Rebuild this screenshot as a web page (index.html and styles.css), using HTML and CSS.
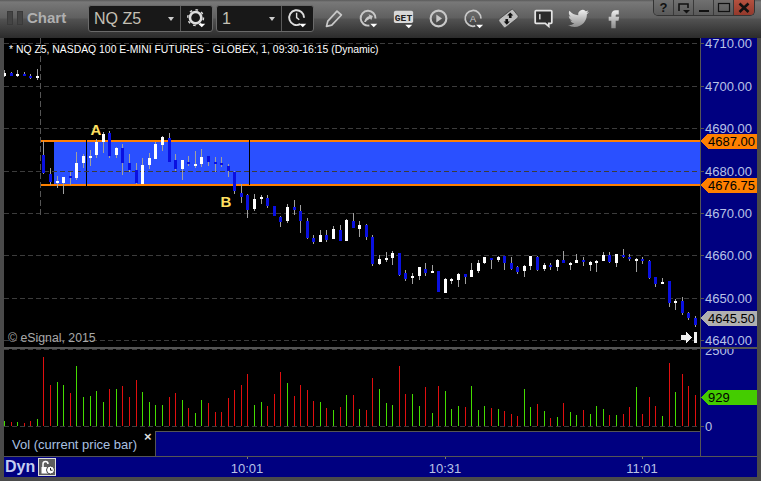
FILE: index.html
```html
<!DOCTYPE html>
<html lang="en">
<head>
  <meta charset="UTF-8">
  <title>Chart</title>
  <link rel="stylesheet" href="styles.css">
</head>
<body>
  <div class="window">
    <div class="toolbar">
      <div class="grip"><span></span><span></span></div>
      <div class="title">Chart</div>

      <div class="combo combo-symbol">
        <div class="combo-field">NQ Z5<i class="caret"></i></div>
        <div class="combo-btn">
          <svg class="icon" viewBox="0 0 24 24">
            <circle cx="11" cy="11" r="9" fill="none" stroke="#ddd" stroke-width="1.6" stroke-dasharray="3 4"/>
            <circle cx="11" cy="11" r="6.5" fill="none" stroke="#ddd" stroke-width="3"/>
            <path d="M14 18h8l-4 4z" fill="#fff"/>
          </svg>
        </div>
      </div>

      <div class="combo combo-interval">
        <div class="combo-field">1<i class="caret"></i></div>
        <div class="combo-btn">
          <svg class="icon" viewBox="0 0 24 24">
            <path d="M15 18.5A8.5 8.5 0 1 1 19.5 11" fill="none" stroke="#ddd" stroke-width="2.2"/>
            <path d="M11 5.5V11l3 2.5" fill="none" stroke="#ddd" stroke-width="1.6"/>
            <path d="M14 18h8l-4 4z" fill="#fff"/>
          </svg>
        </div>
      </div>

      <div class="tools">
        <div class="tool">
          <svg class="icon" viewBox="0 0 24 24">
            <path d="M4 21l1.5-6L16 3.5l5 4.5L10 19.5z" fill="none" stroke="#c8c8c8" stroke-width="2" stroke-linejoin="round"/>
          </svg>
        </div>
        <div class="tool">
          <svg class="icon" viewBox="0 0 24 24">
            <path d="M13 20A8.5 8.5 0 1 1 20 12" fill="none" stroke="#c8c8c8" stroke-width="2.2"/>
            <path d="M7 16c1-4 3-6 6-7l-1-2 5 2-2 5-1-2c-2 1-4 2-5 4z" fill="#c8c8c8"/>
            <path d="M14 18h8l-4 4z" fill="#fff"/>
          </svg>
        </div>
        <div class="tool">
          <svg class="icon" viewBox="0 0 24 24">
            <rect x="1" y="3" width="22" height="14" rx="2" fill="#d8d8d8"/>
            <text class="get-text" x="12" y="14.5">GET</text>
            <path d="M14 19h8l-4 4z" fill="#fff"/>
          </svg>
        </div>
        <div class="tool">
          <svg class="icon" viewBox="0 0 24 24">
            <circle cx="12" cy="12" r="9" fill="none" stroke="#c8c8c8" stroke-width="2.4"/>
            <path d="M9.5 7.5l6.5 4.5-6.5 4.5z" fill="#c8c8c8"/>
          </svg>
        </div>
        <div class="tool">
          <svg class="icon" viewBox="0 0 24 24">
            <path d="M14 20.5A9 9 0 1 1 20.5 12" fill="none" stroke="#c8c8c8" stroke-width="2"/>
            <text class="circle-a" x="11.5" y="16.5">A</text>
            <path d="M15 19h8l-4 4z" fill="#fff"/>
          </svg>
        </div>
        <div class="tool">
          <svg class="icon" viewBox="0 0 24 24">
            <rect x="1.5" y="6" width="21" height="12" rx="2" transform="rotate(-38 12 12)" fill="#bdbdbd" stroke="#3a3a3a" stroke-width="0.8"/>
            <path d="M14 5l3.5 3.5h-2v3h-3v-3h-2zM10 19l-3.500-3.500h2v-3h3v3h2z" fill="#111"/>
          </svg>
        </div>
        <div class="tool">
          <svg class="icon" viewBox="0 0 24 24">
            <path d="M3.5 3h17a1 1 0 0 1 1 1v12.5a1 1 0 0 1-1 1H18V21l-4-3.500H3.500a1 1 0 0 1-1-1V4a1 1 0 0 1 1-1z" fill="#2c2c2c" stroke="#e4e4e4" stroke-width="2"/>
            <rect x="7" y="7" width="1.6" height="6" fill="#e4e4e4"/>
          </svg>
        </div>
        <div class="tool">
          <svg class="icon" viewBox="0 0 24 24">
            <path fill="url(#bird)" d="M23.953 4.57a10 10 0 01-2.825.775 4.958 4.958 0 002.163-2.723c-.951.555-2.005.959-3.127 1.184a4.92 4.92 0 00-8.384 4.482C7.69 8.095 4.067 6.13 1.64 3.162a4.822 4.822 0 00-.666 2.475c0 1.71.87 3.213 2.188 4.096a4.904 4.904 0 01-2.228-.616v.06a4.923 4.923 0 003.946 4.827 4.996 4.996 0 01-2.212.085 4.936 4.936 0 004.604 3.417 9.867 9.867 0 01-6.102 2.105c-.39 0-.779-.023-1.17-.067a13.995 13.995 0 007.557 2.209c9.053 0 13.998-7.496 13.998-13.985 0-.21 0-.42-.015-.63A9.935 9.935 0 0024 4.59z"/>
            <defs>
              <linearGradient id="bird" x1="0" y1="0" x2="0" y2="1">
                <stop offset="0" stop-color="#eee"/>
                <stop offset="1" stop-color="#8c8c8c"/>
              </linearGradient>
            </defs>
          </svg>
        </div>
        <div class="tool">
          <svg class="icon" viewBox="0 0 24 24">
            <path fill="url(#bird)" d="M14.5 7.5H18v-5h-3.500c-3 0-5 2.200-5 5V10h-3v4.500h3V23h5v-8.500h3.200l.8-4.500h-4V8.500c0-.6.4-1 1-1z"/>
          </svg>
        </div>
      </div>

      <div class="win-btns">
        <div class="win-btn">?</div>
        <div class="win-btn">
          <svg width="14" height="12" viewBox="0 0 14 12"><path d="M2 9V2h9v4" fill="none" stroke="#111" stroke-width="1.6"/><path d="M6 8h7l-3.500 3.500z" fill="#111"/></svg>
        </div>
        <div class="win-btn">
          <svg width="14" height="12" viewBox="0 0 14 12"><rect x="2" y="8" width="10" height="2" fill="#111"/></svg>
        </div>
        <div class="win-btn">
          <svg width="14" height="12" viewBox="0 0 14 12"><rect x="1.5" y="1.5" width="11" height="8" fill="none" stroke="#111" stroke-width="1.2"/></svg>
        </div>
        <div class="win-btn win-close">
          <svg width="14" height="12" viewBox="0 0 14 12"><path d="M2.5 1.500l9 8.500M11.500 1.500l-9 8.500" stroke="#111" stroke-width="2.6"/></svg>
        </div>
      </div>
    </div>

    <svg id="price-pane" class="pane" width="753" height="309" viewBox="4 38 753 309"></svg>
    <div class="divider"></div>
    <svg id="volume-pane" class="pane" width="753" height="82" viewBox="4 349 753 82"></svg>

    <div class="legend-row">
      <div class="legend">Vol (current price bar)<span class="legend-close">×</span></div>
      <div class="legend-fill"></div>
      <div class="axis-fill"></div>
    </div>

    <div class="time-axis" id="time-axis">
      <div class="dyn">Dyn</div>
      <div class="lock">
        <svg width="15" height="15" viewBox="0 0 15 15">
          <path d="M3 7V4a2.500 2.500 0 0 1 5 0" fill="none" stroke="#fff" stroke-width="1.5"/>
          <rect x="1.5" y="7" width="8" height="6.5" fill="#fff"/>
          <circle cx="10.5" cy="10" r="4" fill="#fff" stroke="#444"/>
          <path d="M10.5 8v2.200h2" fill="none" stroke="#222"/>
        </svg>
      </div>
    </div>
  </div>

  <script src="chart.js"></script>
</body>
</html>
```

FILE: styles.css
```css
/* General Styling */
body {
  margin: 0;
  background: #4a4a4a;
  font-family: 'Liberation Sans', Arial, sans-serif;
  overflow: hidden;
}

.window {
  width: 761px;
  height: 481px;
  box-sizing: border-box;
  padding: 0 4px 4px;
  background: #4a4a4a;
}

/* Toolbar */
.toolbar {
  display: flex;
  align-items: flex-start;
  height: 38px;
  margin: 0 -4px;
  background: linear-gradient(to bottom, #5a5a5a 0, #787878 2px, #5f5f5f 18px, #525252 19px, #2b2b2b 38px);
}

.grip {
  display: flex;
  gap: 4px;
  margin: 11px 0 0 7px;
}

.grip span {
  width: 4px;
  height: 12px;
  background: #444;
  border: 1px solid #3a3a3a;
}

.title {
  width: 61px;
  margin: 9px 0 0 4px;
  font-size: 15px;
  font-weight: bold;
  line-height: 18px;
  color: #b0b0b0;
}

.combo {
  display: flex;
  height: 25px;
  margin: 5px 3px 0 0;
  background: #181818;
  border: 1px solid #6a6a6a;
  border-radius: 3px;
}

.combo-symbol { width: 123px; }
.combo-interval { width: 96px; margin-right: 2px; }

.combo-field {
  position: relative;
  flex: 1;
  padding-left: 5px;
  font-size: 16px;
  line-height: 25px;
  color: #c4c0b4;
}

.caret {
  position: absolute;
  right: 6px;
  top: 11px;
  border: 3px solid transparent;
  border-top: 4px solid #ccc;
  border-bottom: 0;
}

.combo-btn {
  display: flex;
  align-items: center;
  justify-content: center;
  width: 31px;
  border-left: 1px solid #5a5a5a;
}

.icon {
  width: 21px;
  height: 21px;
}

.tools {
  display: flex;
  margin-top: 8px;
}

.tool {
  display: flex;
  justify-content: center;
  width: 35px;
}

.get-text {
  font-family: 'Liberation Mono', monospace;
  font-size: 11px;
  font-weight: bold;
  text-anchor: middle;
  fill: #222;
}

.circle-a {
  font-size: 11px;
  text-anchor: middle;
  fill: #c8c8c8;
}

.win-btns {
  display: flex;
  margin-left: 22px;
  height: 15px;
  background: #5c5c5c;
  border: 1px solid #333;
  border-top: 0;
  border-radius: 0 0 5px 5px;
  overflow: hidden;
}

.win-btn {
  display: flex;
  align-items: center;
  justify-content: center;
  width: 19px;
  font-size: 13px;
  font-weight: bold;
  color: #111;
  background: linear-gradient(to bottom, #707070, #5a5a5a);
  border-left: 1px solid #3a3a3a;
}

.win-btn:first-child { border-left: 0; }

.win-close {
  width: 20px;
  background: linear-gradient(to bottom, #b4513f, #93392c);
}

/* Chart panes */
.pane {
  display: block;
  background: #000;
  shape-rendering: crispEdges;
}

.divider {
  height: 2px;
  background: #555;
}

.axis-bg { fill: #000080; }
.axis-edge { fill: #555; }

.grid {
  stroke: #3c3c3c;
  stroke-width: 1;
  stroke-dasharray: 5 3;
}

.session {
  stroke: #555;
  stroke-width: 1;
  stroke-dasharray: 6 3;
}

.band { fill: #2a50ff; }
.band-edge { fill: #ff8000; }
.band-tick { fill: #000; }

.wick { fill: #a0a0a0; }
.body-w { fill: #fff; }
.body-b { fill: #0a10e0; }

.vol-g { fill: #44dd00; }
.vol-r { fill: #e00f0f; }

.axis-text {
  font-size: 13px;
  fill: #b8c2e6;
}

.tag-text {
  font-size: 13px;
  fill: #000;
}

.tag-orange { fill: #ff8000; }
.tag-grey { fill: #b0b0b0; }
.tag-green { fill: #44cc00; }

.chart-head {
  font-size: 10.4px;
  fill: #fff;
}

.copyright {
  font-size: 12.3px;
  fill: #a8a8a8;
}

.point-label {
  font-size: 15px;
  font-weight: bold;
  fill: #ffe060;
  text-anchor: middle;
}

.end-arrow { fill: #f0f0f0; }

/* Legend strip */
.legend-row {
  display: flex;
  height: 25px;
}

.legend {
  display: flex;
  width: 151px;
  padding-left: 8px;
  box-sizing: border-box;
  font-size: 13px;
  line-height: 28px;
  color: #a9c0e0;
  background: #000;
}

.legend-close {
  margin: -8px 0 0 7px;
  font-size: 13px;
  font-weight: bold;
  color: #ddd;
}

.legend-fill {
  width: 544px;
  background: #000080;
  border: 1px solid #555;
  border-width: 1px 1px 0;
}

.axis-fill {
  flex: 1;
  background: #000080;
}

/* Time axis */
.time-axis {
  position: relative;
  display: flex;
  align-items: flex-start;
  height: 20px;
  background: #000080;
  border-top: 1px solid #555;
}

.dyn {
  margin: 0 3px 0 1px;
  font-size: 16px;
  font-weight: bold;
  line-height: 19px;
  color: #c4cdf0;
}

.lock {
  display: flex;
  align-items: center;
  justify-content: center;
  width: 16px;
  height: 16px;
  margin-top: 1px;
  background: #5e5e5e;
  border: 1px solid #ddd;
}

.time-tick {
  position: absolute;
  top: 0;
  width: 1px;
  height: 2px;
  background: #777;
}

.time-label {
  position: absolute;
  top: 4px;
  width: 40px;
  font-size: 13px;
  line-height: 15px;
  text-align: center;
  color: #b8c2e6;
}
```

FILE: chart.js
```js
// Candles: [high, body top, body bottom, low, colour], in page pixels
const candles = [
  [70,73,76,77,'w'],[72,73,76,76,'b'],[70,74,76,77,'w'],[72,74,76,76,'b'],[74,76,78,79,'b'],[69,76,78,80,'w'],
  [141,155,173,174,'b'],[168,174,182,185,'b'],[176,181,183,188,'w'],[177,177,183,194,'w'],[172,176,178,185,'b'],
  [152,163,178,180,'w'],[154,156,163,168,'w'],[150,156,158,166,'w'],[139,142,155,158,'w'],[132,134,142,153,'w'],
  [131,133,156,158,'b'],[147,148,155,158,'w'],[144,148,163,175,'b'],[154,163,170,172,'b'],[163,170,183,184,'b'],
  [158,165,184,184,'w'],[153,158,165,169,'w'],[142,144,159,159,'w'],[136,137,145,151,'w'],[133,138,162,162,'b'],
  [154,160,169,171,'b'],[160,160,169,180,'w'],[156,162,164,166,'b'],[151,164,166,168,'w'],[149,157,164,167,'w'],
  [156,156,162,166,'b'],[157,162,164,172,'b'],[157,163,165,167,'b'],[164,166,171,177,'b'],[171,172,191,194,'b'],
  [184,193,197,203,'b'],[194,195,210,218,'b'],[194,199,209,211,'w'],[195,197,199,204,'w'],[195,198,206,208,'b'],
  [206,206,216,216,'b'],[216,217,222,227,'b'],[204,207,221,223,'w'],[200,207,210,215,'b'],[205,211,221,233,'b'],
  [218,221,238,239,'b'],[235,238,242,244,'b'],[230,235,242,242,'w'],[230,235,240,242,'b'],[226,229,239,239,'w'],
  [225,230,241,241,'b'],[219,220,241,241,'w'],[213,221,228,228,'b'],[221,225,229,237,'w'],[224,225,237,240,'b'],
  [235,237,264,266,'b'],[255,259,264,265,'w'],[252,258,260,262,'w'],[251,253,258,265,'w'],[253,253,275,276,'b'],
  [270,273,279,281,'b'],[273,276,278,284,'w'],[267,267,276,280,'w'],[263,269,273,276,'b'],[265,271,273,273,'w'],
  [271,271,292,292,'b'],[278,279,293,293,'w'],[278,279,281,284,'w'],[273,274,280,287,'w'],[274,274,277,284,'b'],
  [263,270,277,277,'w'],[260,263,271,273,'w'],[257,257,263,264,'w'],[258,258,260,269,'b'],[256,257,260,262,'w'],
  [256,256,263,270,'b'],[257,263,269,270,'b'],[266,267,272,274,'b'],[265,266,271,277,'w'],[256,256,266,270,'w'],
  [256,257,270,271,'b'],[263,265,269,271,'w'],[263,265,267,270,'b'],[259,260,267,271,'w'],[251,260,263,263,'b'],
  [262,263,265,270,'w'],[254,260,263,263,'w'],[257,260,262,266,'b'],[261,262,265,271,'w'],[260,261,263,272,'w'],
  [252,255,261,261,'w'],[252,255,262,263,'b'],[254,254,263,267,'w'],[249,255,257,258,'b'],[254,257,259,261,'b'],
  [258,259,261,272,'w'],[257,259,261,264,'b'],[260,261,278,279,'b'],[277,277,284,287,'b'],[278,282,284,284,'w'],
  [281,281,303,307,'b'],[299,301,303,310,'w'],[297,301,313,315,'b'],[312,313,318,320,'b'],[316,318,325,327,'b']
];

// Volume bar heights in pixels above the zero line, with up/down colour
const volumes = [
  5,4,4,3,5,7,69,41,44,41,33,60,29,30,35,24,37,37,40,29,46,34,24,21,21,29,33,26,18,13,26,23,14,14,28,36,41,52,21,
  24,20,32,54,43,30,41,36,25,24,18,16,19,31,31,17,16,48,37,23,21,60,32,32,20,39,13,40,35,17,20,19,40,16,20,18,17,15,
  12,10,37,19,22,15,8,9,23,14,11,16,12,20,17,11,11,12,19,39,12,29,20,10,63,34,52,40,31
];
const volumeColors =
  'grgrrgrrggrgggggrgrrrggggrrgrggrrrrrrrg' +
  'grrrgrrrrgrgrgrgrrgggrrggrgrgggrgggrgr' +
  'rrggrgrgrggrgggrgrrgrrrgrgrrr';

const priceTicks = [[4710, 43], [4700, 86], [4690, 128], [4680, 171], [4670, 213], [4660, 255], [4650, 298], [4640, 340]];
const barX = i => Math.round(4 + i * 6.58);

const NS = 'http://www.w3.org/2000/svg';
function add(parent, tag, attrs, text) {
  const el = document.createElementNS(NS, tag);
  for (const k in attrs) el.setAttribute(k, attrs[k]);
  if (text) el.textContent = text;
  parent.appendChild(el);
  return el;
}

function rect(parent, cls, x, y, w, h) {
  return add(parent, 'rect', { class: cls, x, y, width: w, height: h });
}

function dashed(parent, cls, x1, y1, x2, y2) {
  return add(parent, 'line', { class: cls, x1, y1, x2, y2 });
}

function tag(parent, cls, y, label) {
  const top = y - 7.5, bottom = y + 7.5;
  add(parent, 'polygon', { class: cls, points: `701,${y} 708,${top} 757,${top} 757,${bottom} 708,${bottom}` });
  add(parent, 'text', { class: 'tag-text', x: 708, y: y + 5 }, label);
}

// Price pane
const price = document.getElementById('price-pane');

rect(price, 'band', 54, 142, 646, 42);
rect(price, 'band-edge', 40, 140, 660, 2);
rect(price, 'band-edge', 40, 184, 660, 2);
rect(price, 'band-tick', 86, 140, 1, 46);
rect(price, 'band-tick', 249, 138, 1, 47);

priceTicks.forEach(t => dashed(price, 'grid', 4, t[1] + 0.5, 700, t[1] + 0.5));
dashed(price, 'session', 40.5, 38, 40.5, 216);

candles.forEach((c, i) => {
  const x = barX(i);
  rect(price, 'wick', x, c[0], 1, c[3] - c[0]);
  rect(price, 'body-' + c[4], x - 1, c[1], 3, Math.max(c[2] - c[1], 2));
});

rect(price, 'axis-bg', 701, 38, 56, 309);
rect(price, 'axis-edge', 700, 38, 1, 309);
priceTicks.forEach(t => {
  rect(price, 'axis-edge', 701, t[1], 3, 1);
  add(price, 'text', { class: 'axis-text', x: 705, y: t[1] + 5 }, t[0] + '.00');
});

tag(price, 'tag-orange', 141, '4687.00');
tag(price, 'tag-orange', 185, '4676.75');
tag(price, 'tag-grey', 318, '4645.50');

add(price, 'text', { class: 'chart-head', x: 9, y: 53 }, '* NQ Z5, NASDAQ 100 E-MINI FUTURES - GLOBEX, 1, 09:30-16:15 (Dynamic)');
add(price, 'text', { class: 'copyright', x: 8, y: 342 }, '© eSignal, 2015');
add(price, 'text', { class: 'point-label', x: 96, y: 135 }, 'A');
add(price, 'text', { class: 'point-label', x: 226, y: 207 }, 'B');
add(price, 'path', { class: 'end-arrow', d: 'M681 335h5v-3.500l6 6-6 6V340h-5zM694 332h3v11h-3z' });

// Volume pane
const volume = document.getElementById('volume-pane');

dashed(volume, 'grid', 4, 349.5, 700, 349.5);
dashed(volume, 'grid', 4, 426.5, 700, 426.5);
volumes.forEach((h, i) => {
  rect(volume, volumeColors[i] === 'g' ? 'vol-g' : 'vol-r', barX(i), 426 - h, 1, h);
});

rect(volume, 'axis-bg', 701, 349, 56, 82);
rect(volume, 'axis-edge', 700, 349, 1, 82);
rect(volume, 'axis-edge', 701, 426, 3, 1);
add(volume, 'text', { class: 'axis-text', x: 705, y: 355 }, '2500');
add(volume, 'text', { class: 'axis-text', x: 705, y: 431 }, '0');

add(volume, 'polygon', { class: 'tag-green', points: '701,397.5 708,390 757,390 757,405 708,405' });
add(volume, 'text', { class: 'tag-text', x: 708, y: 402 }, '929');

// Time axis
const axis = document.getElementById('time-axis');

[[247, '10:01'], [445, '10:31'], [642, '11:01']].forEach(t => {
  const left = t[0] - 4;
  const mark = document.createElement('div');
  mark.className = 'time-tick';
  mark.style.left = left + 'px';
  axis.appendChild(mark);

  const label = document.createElement('div');
  label.className = 'time-label';
  label.style.left = (left - 20) + 'px';
  label.textContent = t[1];
  axis.appendChild(label);
});
```
